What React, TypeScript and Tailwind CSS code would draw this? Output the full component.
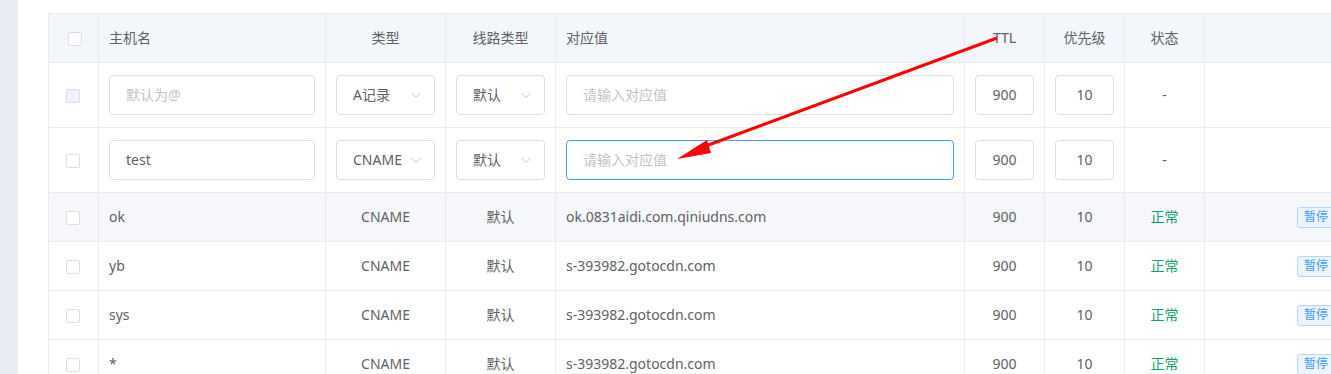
import React from 'react'

const font = { fontFamily: '"Noto Sans", "Noto Sans CJK SC", sans-serif' }

function Checkbox({ disabled = false, className = '' }: { disabled?: boolean; className?: string }) {
  return (
    <span
      className={
        'inline-block h-[14px] w-[14px] rounded-[2px] border border-[#dcdfe6] align-middle ' +
        (disabled ? 'bg-[#edf2fc] ' : 'bg-white ') +
        className
      }
    />
  )
}

function Chevron() {
  return (
    <svg width="12" height="12" viewBox="0 0 12 12" className="text-[#c0c4cc]">
      <path d="M1.5 4l4.5 4.5L10.5 4" fill="none" stroke="currentColor" strokeWidth="1" />
    </svg>
  )
}

function Select({ value }: { value: string }) {
  return (
    <div className="flex h-10 w-full items-center justify-between rounded-[4px] border border-[#dcdfe6] bg-white pl-4 pr-3 text-sm text-[#606266]">
      <span>{value}</span>
      <Chevron />
    </div>
  )
}

function Input({
  value,
  placeholder,
  focused = false,
  center = false,
}: {
  value?: string
  placeholder?: string
  focused?: boolean
  center?: boolean
}) {
  return (
    <div
      className={
        'flex h-10 w-full items-center rounded-[4px] border bg-white text-sm ' +
        (focused ? 'border-[#409eff] ' : 'border-[#dcdfe6] ') +
        (center ? 'justify-center' : 'pl-4')
      }
    >
      {value ? (
        <span className="text-[#606266]">{value}</span>
      ) : (
        <span className="text-[#c0c4cc]">{placeholder}</span>
      )}
    </div>
  )
}

const records = [
  { host: 'ok', value: 'ok.0831aidi.com.qiniudns.com', hover: true },
  { host: 'yb', value: 's-393982.gotocdn.com', hover: false },
  { host: 'sys', value: 's-393982.gotocdn.com', hover: false },
  { host: '*', value: 's-393982.gotocdn.com', hover: false },
]

const td = 'border border-[#e9ecf2] px-[10px]'

export default function App() {
  return (
    <div className="relative flex h-[374px] w-[1331px] overflow-hidden bg-white" style={font}>
      <div className="h-full w-[18px] shrink-0 bg-[#e9edf3]" />
      <div className="pl-[30px] pt-[13px]">
        <table className="w-[1316px] table-fixed border-collapse text-sm text-[#606266]">
          <colgroup>
            <col className="w-[50px]" />
            <col className="w-[227px]" />
            <col className="w-[120px]" />
            <col className="w-[110px]" />
            <col className="w-[409px]" />
            <col className="w-[80px]" />
            <col className="w-[80px]" />
            <col className="w-[80px]" />
            <col />
          </colgroup>
          <thead>
            <tr className="h-[49px] bg-[#f3f6fa]">
              <th className={td + ' text-center'}>
                <Checkbox className="relative left-[1px]" />
              </th>
              <th className={td + ' text-left font-normal'}>主机名</th>
              <th className={td + ' text-center font-normal'}>类型</th>
              <th className={td + ' text-center font-normal'}>线路类型</th>
              <th className={td + ' text-left font-normal'}>对应值</th>
              <th className={td + ' text-center font-normal'}>TTL</th>
              <th className={td + ' text-center font-normal'}>优先级</th>
              <th className={td + ' text-center font-normal'}>状态</th>
              <th className={td} />
            </tr>
          </thead>
          <tbody>
            <tr className="h-[65px]">
              <td className={td + ' text-center'}>
                <Checkbox disabled className="relative -left-[1px]" />
              </td>
              <td className={td}>
                <Input placeholder="默认为@" />
              </td>
              <td className={td}>
                <Select value="A记录" />
              </td>
              <td className={td}>
                <Select value="默认" />
              </td>
              <td className={td}>
                <Input placeholder="请输入对应值" />
              </td>
              <td className={td}>
                <Input value="900" center />
              </td>
              <td className={td}>
                <Input value="10" center />
              </td>
              <td className={td + ' text-center'}>-</td>
              <td className={td} />
            </tr>
            <tr className="h-[65px]">
              <td className={td + ' text-center'}>
                <Checkbox className="relative -left-[1px]" />
              </td>
              <td className={td}>
                <Input value="test" />
              </td>
              <td className={td}>
                <Select value="CNAME" />
              </td>
              <td className={td}>
                <Select value="默认" />
              </td>
              <td className={td}>
                <Input placeholder="请输入对应值" focused />
              </td>
              <td className={td}>
                <Input value="900" center />
              </td>
              <td className={td}>
                <Input value="10" center />
              </td>
              <td className={td + ' text-center'}>-</td>
              <td className={td} />
            </tr>
            {records.map((r) => (
              <tr key={r.host} className={'h-[49px] ' + (r.hover ? 'bg-[#f5f7fa]' : '')}>
                <td className={td + ' text-center'}>
                  <Checkbox className="relative -left-[1px]" />
                </td>
                <td className={td}>{r.host}</td>
                <td className={td + ' text-center'}>CNAME</td>
                <td className={td + ' text-center'}>默认</td>
                <td className={td}>{r.value}</td>
                <td className={td + ' text-center'}>900</td>
                <td className={td + ' text-center'}>10</td>
                <td className={td + ' text-center text-[#0ea36c]'}>正常</td>
                <td className={td + ' pl-[92px]'}>
                  <button className="h-[21px] rounded-[3px] border border-[#b3d8ff] bg-[#ecf5ff] px-[6px] text-xs text-[#409eff]">
                    暂停
                  </button>
                </td>
              </tr>
            ))}
          </tbody>
        </table>
      </div>
      <svg className="pointer-events-none absolute left-0 top-0" width="1331" height="374">
        <line x1="997" y1="38" x2="703" y2="147" stroke="#ff0000" strokeWidth="3" />
        <polygon points="677,159 707,140 711,153" fill="#ff0000" />
      </svg>
    </div>
  )
}
